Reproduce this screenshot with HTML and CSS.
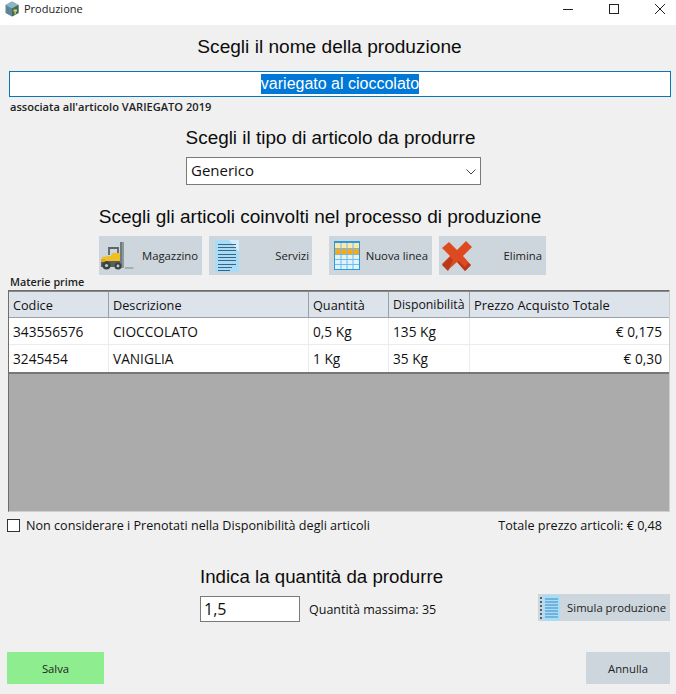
FILE: index.html
```html
<!DOCTYPE html>
<html lang="it">
<head>
<meta charset="utf-8">
<title>Produzione</title>
<link rel="stylesheet" href="styles.css">
</head>
<body>
<header class="titlebar">
  <svg class="app-icon" width="16" height="16" viewBox="0 0 16 16"><path d="M8 0.500 14.500 4v8L8 15.500 1.500 12V4z" fill="#5d8596"/><path d="M8 0.500 14.500 4 8 7.500 1.500 4z" fill="#8fb4c6"/><path d="M8 7.500v8l6.500-3.500V4z" fill="#3f6b58"/><path d="M9.500 8.500h3.500v2h-1.200v3h-1.200v-3H9.500z" fill="#d8d36a"/></svg>
  <span class="window-title">Produzione</span>
  <div class="window-controls">
    <svg width="12" height="12" viewBox="0 0 12 12" class="wc wc-min"><path d="M1 6.500h10" stroke="#222" fill="none"/></svg>
    <svg width="12" height="12" viewBox="0 0 12 12" class="wc wc-max"><rect x="1.500" y="1.500" width="9" height="9" stroke="#222" fill="none"/></svg>
    <svg width="12" height="12" viewBox="0 0 12 12" class="wc wc-close"><path d="M1 1l10 10M11 1 1 11" stroke="#222" fill="none"/></svg>
  </div>
</header>
<main class="content">
  <h2 class="heading h-name">Scegli il nome della produzione</h2>
  <div class="name-input"><span class="selected">variegato al cioccolato</span></div>
  <div class="assoc">associata all'articolo VARIEGATO 2019</div>
  <h2 class="heading h-type">Scegli il tipo di articolo da produrre</h2>
  <div class="select">
    <span>Generico</span>
    <svg width="10" height="6" viewBox="0 0 10 6"><path d="M0.500 0.500 5 5l4.500-4.500" stroke="#444" fill="none"/></svg>
  </div>
  <h2 class="heading h-items">Scegli gli articoli coinvolti nel processo di produzione</h2>
  <div class="toolbar">
    <button class="btn tool t-mag">
      <svg width="33" height="28" viewBox="0 0 33 28"><path d="M24 25.500h8.500v1H24z" fill="#7d8788"/><path d="M19 0h4v26h-4z" fill="#6f7b7c"/><path d="M21 0h2v26h-2z" fill="#8d9899"/><path d="M8 13V6h9v9" fill="none" stroke="#59666a" stroke-width="1.800"/><path d="M1 15l7-1 2 0 1-3h8v10H1z" fill="#efc026"/><path d="M0 19h19v6H0z" fill="#59605a"/><path d="M0 17h4v3H0z" fill="#e0a918"/><circle cx="5.500" cy="23.500" r="4" fill="#3b4242"/><circle cx="5.500" cy="23.500" r="1.600" fill="#c5cccc"/><circle cx="17" cy="24" r="3.500" fill="#3b4242"/><circle cx="17" cy="24" r="1.400" fill="#c5cccc"/></svg>
      <span class="t-label">Magazzino</span>
    </button>
    <button class="btn tool t-srv">
      <svg width="24" height="32" viewBox="0 0 24 32"><path d="M0 0h24v32H0z" fill="#a9dcf5"/><path d="M14 0h10v12z" fill="#d4eefb"/><path d="M3 4.500h18M3 7.500h18M3 10.500h18M3 14.500h18M3 17.500h18M3 20.500h18M3 24.500h18M3 27.500h14M3 30.500h12" stroke="#3d6486" fill="none"/></svg>
      <span class="t-label">Servizi</span>
    </button>
    <button class="btn tool t-new">
      <svg width="26" height="29" viewBox="0 0 26 29"><rect width="26" height="29" fill="#2a9ae0"/><path d="M1 2h24v26H1z" fill="#dff3fd"/><path d="M1 2h24v6H1z" fill="#fbe9a6"/><path d="M1 8h24v5H1z" fill="#f9a81b"/><path d="M1 13h24v3H1z" fill="#fdf0c2"/><path d="M7 2v26M13 2v26M19 2v26M1 7.500h24M1 13.500h24M1 18.500h24M1 23.500h24" stroke="#6dbcec" fill="none"/></svg>
      <span class="t-label">Nuova linea</span>
    </button>
    <button class="btn tool t-del">
      <svg width="30" height="30" viewBox="0 0 30 30"><path d="M0 7 7 1 15 9 24 0l6 6-9 9 8 9-6 6-8-9-9 8-6-6 8-8z" fill="#de4a20"/><path d="M0 24l8-8 3 3-5 11zM15 21l8 9 6-6-3-2-3 4-6-6z" fill="#b73a1b"/></svg>
      <span class="t-label">Elimina</span>
    </button>
  </div>
  <div class="table-label">Materie prime</div>
  <div class="grid">
    <div class="row head">
      <div class="c c1">Codice</div><div class="c c2">Descrizione</div><div class="c c3">Quantità</div><div class="c c4">Disponibilità</div><div class="c c5">Prezzo Acquisto Totale</div>
    </div>
    <div class="row">
      <div class="c c1">343556576</div><div class="c c2">CIOCCOLATO</div><div class="c c3">0,5 Kg</div><div class="c c4">135 Kg</div><div class="c c5 num">€ 0,175</div>
    </div>
    <div class="row">
      <div class="c c1">3245454</div><div class="c c2">VANIGLIA</div><div class="c c3">1 Kg</div><div class="c c4">35 Kg</div><div class="c c5 num">€ 0,30</div>
    </div>
    <div class="grid-empty"></div>
  </div>
  <div class="options">
    <label class="check"><span class="box"></span><span>Non considerare i Prenotati nella Disponibilità degli articoli</span></label>
    <span class="total">Totale prezzo articoli: € 0,48</span>
  </div>
  <h2 class="heading h-qty">Indica la quantità da produrre</h2>
  <div class="qty-row">
    <div class="qty-input">1,5</div>
    <span class="qty-max">Quantità massima: 35</span>
    <button class="btn sim">
      <svg width="20" height="26" viewBox="0 0 20 26"><path d="M3 0h17v26H3z" fill="#a9dcf5"/><path d="M5 4h13M5 7h13M5 10h13M5 13h13M5 16h13M5 19h13M5 22h13" stroke="#3f87c4" fill="none"/><path d="M1 2v23" stroke="#44617a" stroke-width="2" stroke-dasharray="2 2" fill="none"/></svg>
      <span>Simula produzione</span>
    </button>
  </div>
  <div class="actions">
    <button class="btn act save">Salva</button>
    <button class="btn act cancel">Annulla</button>
  </div>
</main>
</body>
</html>
```
FILE: styles.css
```css
* { box-sizing: border-box; }
html, body { margin: 0; padding: 0; }
body {
  width: 676px;
  height: 694px;
  overflow: hidden;
  background: #f0f0f0;
  color: #111;
  font-family: "Open Sans", "Noto Sans", sans-serif;
  font-size: 11px;
}
.titlebar {
  height: 25px;
  background: #fff;
  display: flex;
  align-items: center;
  padding: 0 10px 8px 4px;
}
.app-icon { margin-right: 4px; }
.window-title { font-size: 11px; color: #222; }
.window-controls { margin-left: auto; display: flex; align-items: center; }
.wc-min { margin-right: 34px; }
.wc-max { margin-right: 34px; }
.content { display: flex; flex-direction: column; padding: 0 6px 0 7px; }
.heading {
  margin: 0;
  font-family: "Liberation Sans", Arial, sans-serif;
  font-weight: 400;
  font-size: 19px;
  line-height: 22px;
  text-align: center;
  color: #0c0c0c;
}
.h-name { margin-top: 11px; padding-right: 18px; font-size: 19.100px; }
.name-input {
  margin: 13px 0 0 2px;
  width: 662px;
  height: 26px;
  background: #fff;
  border: 1px solid #0f73b8;
  display: flex;
  align-items: center;
  justify-content: center;
  font-family: "Liberation Sans", Arial, sans-serif;
  font-size: 16px;
}
.selected { background: #0078d7; color: #fff; line-height: 20px; }
.assoc { margin: 3px 0 0 3px; font-size: 11.100px; line-height: 14px; font-weight: 600; color: #222; }
.h-type { margin-top: 13px; padding-right: 16px; font-size: 18.900px; }
.select {
  margin: 8px 0 0 179px;
  width: 295px;
  height: 28px;
  background: #fff;
  border: 1px solid #7a7a7a;
  display: flex;
  align-items: center;
  justify-content: space-between;
  padding: 0 4px 2px 4px;
  font-size: 15px;
}
.select svg { margin-top: 4px; }
.h-items { margin-top: 21px; padding-right: 37px; }
.toolbar { display: flex; margin: 8px 0 0 92px; }
.btn {
  border: 0;
  padding: 0;
  background: #cdd6dd;
  color: #222;
  font-family: "Open Sans", "Noto Sans", sans-serif;
  font-size: 11.300px;
}
.tool {
  height: 39px;
  width: 103px;
  display: flex;
  align-items: center;
  justify-content: space-between;
  padding: 0 4px 0 2px;
}
.t-srv { margin-left: 7px; padding: 0 3px 0 6px; }
.t-new { margin-left: 17px; padding-left: 5px; }
.t-del { margin-left: 7px; width: 107px; padding-left: 3px; }
.table-label { margin: 0 0 0 3px; font-size: 10.800px; line-height: 13px; font-weight: 600; color: #222; }
.grid {
  width: 662px;
  margin-top: 2px;
  margin-left: 1px;
  height: 222px;
  border: 1px solid #6e6e6e;
  border-right-color: #cfcfcf;
  border-bottom-color: #cfcfcf;
  background: #ababab;
  display: flex;
  flex-direction: column;
  font-size: 13.700px;
}
.row {
  display: flex;
  height: 27px;
  background: #fff;
  border-bottom: 1px solid #ececec;
  align-items: stretch;
}
.row.head { height: 27px; background: #dde3ea; border-top: 1px solid #888; border-bottom: 1px solid #9aa0a6; font-size: 12.700px; }
.row:nth-child(3) { border-bottom: 2px solid #777; height: 29px; }
.c { padding: 0 4px; display: flex; align-items: center; border-right: 1px solid #ececec; white-space: nowrap; }
.head .c { border-right-color: #9aa0a6; }
.head .c4 { font-size: 12.300px; }
.head .c5 { font-size: 12.900px; }
.c1 { width: 100px; }
.c2 { width: 200px; }
.c3 { width: 80px; }
.c4 { width: 81px; }
.c5 { flex: 1; border-right: 0; }
.num { justify-content: flex-end; padding-right: 7px; }
.grid-empty { flex: 1; }
.options { display: flex; align-items: center; justify-content: space-between; height: 16px; margin-top: 5px; padding-right: 8px; font-size: 12.600px; }
.check { display: flex; align-items: center; gap: 6px; }
.box { width: 13px; height: 13px; background: #fff; border: 1px solid #333; }
.h-qty { margin-top: 33px; padding-right: 34px; font-size: 18.700px; }
.qty-row { display: flex; align-items: flex-start; margin: 8px 0 0 193px; }
.qty-input {
  width: 100px;
  height: 26px;
  background: #fff;
  border: 1px solid #7a7a7a;
  padding: 0 3px;
  display: flex;
  align-items: center;
  font-size: 16px;
}
.qty-max { margin: 5px 0 0 9px; font-size: 12.500px; line-height: 18px; width: 229px; }
.sim {
  width: 132px;
  height: 27px;
  margin-top: -2px;
  display: flex;
  align-items: center;
  justify-content: space-between;
  padding: 0 4px 0 2px;
}
.actions { display: flex; justify-content: space-between; margin-top: 30px; }
.act { height: 32px; }
.save { width: 97px; background: #8eed8e; }
.cancel { width: 84px; }
```
